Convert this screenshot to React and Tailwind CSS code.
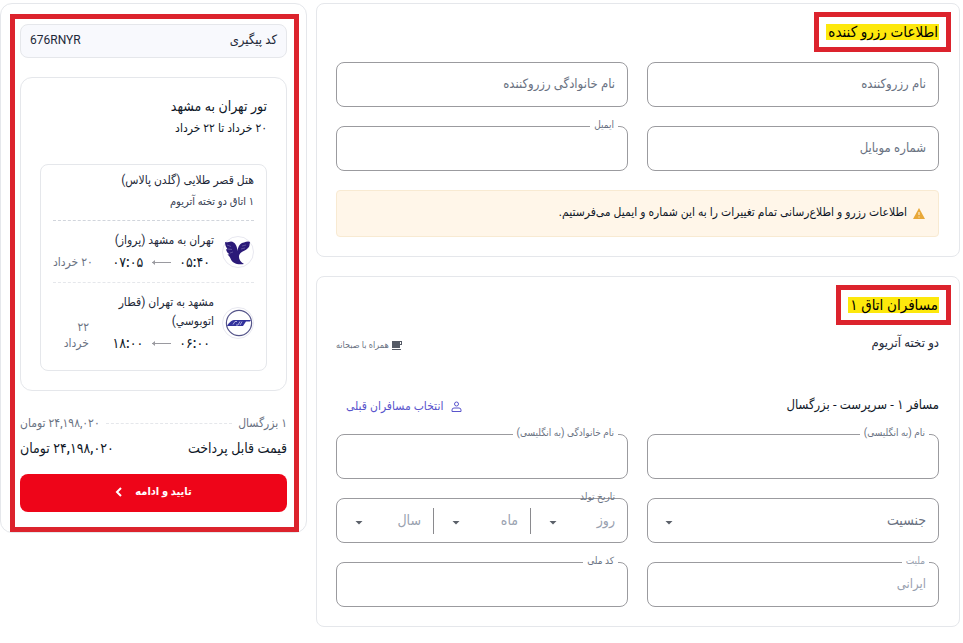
import { useId } from "react";

function Caret() {
  return (
    <svg className="pointer-events-none absolute top-1/2 left-[18px] h-1 w-2" viewBox="0 0 8 4" aria-hidden="true">
      <path d="M.5 0h7L4 3.500z" fill="#5b6069" />
    </svg>
  );
}

function Notch({ htmlFor, muted, children }) {
  return (
    <label
      htmlFor={htmlFor}
      className={`absolute -top-[7px] right-[10px] bg-white px-1 text-[10px] leading-3 ${muted ? "text-gray-400" : "text-gray-500"}`}
    >
      {children}
    </label>
  );
}

function Field({ label, placeholder, value, disabled }) {
  const id = useId();
  return (
    <div className="relative">
      <input
        id={id}
        type="text"
        aria-label={label ? undefined : placeholder}
        placeholder={placeholder}
        defaultValue={value}
        disabled={disabled}
        className="block h-[45px] w-full rounded-lg border border-[#9b9b9f] bg-white px-3 pb-0.5 text-[13px] text-gray-800 placeholder:text-gray-500 focus:outline-none focus:ring-2 focus:ring-blue-500 disabled:text-gray-400"
      />
      {label && <Notch htmlFor={id} muted={disabled}>{label}</Notch>}
    </div>
  );
}

function GenderSelect() {
  return (
    <div className="relative">
      <select
        aria-label="جنسیت"
        defaultValue=""
        className="block h-[45px] w-full appearance-none rounded-lg border border-[#9b9b9f] bg-white px-3 text-[14px] text-gray-500"
      >
        <option value="">جنسیت</option>
        <option>مرد</option>
        <option>زن</option>
      </select>
      <Caret />
    </div>
  );
}

function BirthDate() {
  const parts = ["روز", "ماه", "سال"];
  return (
    <div role="group" aria-label="تاریخ تولد" className="relative flex h-[45px] items-center rounded-lg border border-[#9b9b9f] bg-white">
      {parts.map((part, i) => (
        <div key={part} className={`relative flex-1 ${i > 0 ? "border-r border-[#8a8a8e]" : ""}`}>
          <select
            aria-label={part}
            defaultValue=""
            className="block h-[26px] w-full appearance-none bg-transparent px-3 text-[14px] text-gray-400"
          >
            <option value="">{part}</option>
          </select>
          <Caret />
        </div>
      ))}
      <span className="absolute -top-2 right-2 px-1 text-[10px] leading-3 text-gray-500">تاریخ تولد</span>
    </div>
  );
}

function MarkedHeading({ children }) {
  return (
    <h2 className="relative w-fit text-[15px] leading-4 text-black">
      <span className="block bg-[#fde80c] pr-px pl-0.5">{children}</span>
      <span className="pointer-events-none absolute -inset-x-3 -inset-y-3 border-[5px] border-[#dc232d]" />
    </h2>
  );
}

function AirlineLogo() {
  return (
    <svg className="h-8 w-8 shrink-0" viewBox="0 0 32 32" aria-hidden="true">
      <circle cx="16" cy="16" r="15.5" fill="#fff" stroke="#e8e8f0" />
      <path
        d="M3 6c2 1 4-.5 6-.5 4 .5 6 4 6.500 9.500.5-5 3-8 6.500-8.500 2-1 5-1.500 6-.5 0 1-.5 2-.5 3 0 1.500-1 2.500-2 3.500-1.500 2-5 2.500-7 4.500-3 3-1.500 8 3.500 11-7 1-12-1-13.500-5.500-.5-1.500-1.500-2.500-3-4l2-.3c-2-1-3-3-3.500-5l1.500.1C4 11 3 9 3 6z"
        fill="#2b1a78"
      />
      <path d="M5 9l4 1.500M6 13l4 .5M8 17l3-1M20 10l4-1M19 13l4-1" stroke="#8f86bd" strokeWidth=".5" />
    </svg>
  );
}

function TrainLogo() {
  return (
    <svg className="h-8 w-8 shrink-0" viewBox="0 0 32 32" aria-hidden="true">
      <circle cx="16" cy="16" r="15.5" fill="#fff" stroke="#e8e8f0" />
      <circle cx="17" cy="16" r="12.6" fill="#fff" stroke="#55558a" strokeWidth="1.2" />
      <path d="M12 13h17l-1 1.500h-4L21 19H5c1-2 4-5.500 7-6z" fill="#33339c" />
      <path d="M11 17.500l2-3h2M14 18h2l2-3.500M18 18l2-3.500" fill="none" stroke="#c9c9ee" strokeWidth=".8" />
    </svg>
  );
}

function Leg({ logo, title, from, to, date, wrapDate }) {
  return (
    <div className="flex items-center gap-2">
      {logo}
      <div className="flex flex-1 items-end justify-between">
        <div>
          <p className="max-w-[112px] text-[12px] leading-[19px] text-gray-800">{title}</p>
          <p className="flex items-center gap-2 pt-0.5 pr-1 text-[14px] leading-5 font-medium text-gray-900">
            <span>{from}</span>
            <svg className="h-2 w-5" viewBox="0 0 20 8" fill="none" stroke="#9a9aa0" aria-hidden="true">
              <path d="M1 4.500h19" />
              <path d="M4 2L1 4.500 4 7z" fill="#9a9aa0" stroke="none" />
            </svg>
            <span>{to}</span>
          </p>
        </div>
        <p className={`pb-0.5 text-[12px] leading-4 text-gray-500 ${wrapDate ? "w-9" : "whitespace-nowrap"}`}>{date}</p>
      </div>
    </div>
  );
}

function Summary() {
  return (
    <aside className="relative self-start rounded-xl border border-gray-200 bg-white px-[19px] py-5">
      <div className="flex h-[34px] items-center justify-between rounded-lg border border-gray-200 bg-[#f8f9fd] px-[9px] pb-0.5 text-gray-800">
        <span className="text-[13px]">کد پیگیری</span>
        <span className="text-[12px]">676RNYR</span>
      </div>

      <section className="mt-[19px] rounded-xl border border-gray-200 px-[19px] pt-[18px] pb-[19px]">
        <h3 className="text-[14px] leading-5 text-gray-900">تور تهران به مشهد</h3>
        <p className="pt-0.5 text-[12px] leading-5 text-gray-900">۲۰ خرداد تا ۲۲ خرداد</p>

        <div className="mt-[26px] rounded-lg border border-gray-200 px-3 pb-[17px]">
          <p className="pt-[5px] text-[12px] leading-5 text-gray-800">هتل قصر طلایی (گلدن پالاس)</p>
          <p className="pt-0.5 text-[11px] leading-5 text-gray-700">۱ اتاق دو تخته آتریوم</p>
          <hr className="mt-2 mb-[10px] border-dashed border-gray-300" />
          <Leg logo={<AirlineLogo />} title="تهران به مشهد (پرواز)" from="۰۵:۴۰" to="۰۷:۰۵" date="۲۰ خرداد" />
          <hr className="my-[10px] border-dashed border-gray-200" />
          <Leg logo={<TrainLogo />} title="مشهد به تهران (قطار اتوبوسي)" from="۰۶:۰۰" to="۱۸:۰۰" date="۲۲ خرداد" wrapDate />
        </div>
      </section>

      <div className="mt-[22px] flex items-center gap-1.5 text-[12px] leading-5 text-gray-500">
        <span>۱ بزرگسال</span>
        <span className="flex-1 border-t border-dashed border-gray-200" />
        <span>۲۴,۱۹۸,۰۲۰ تومان</span>
      </div>
      <div className="mt-[3px] flex items-center justify-between text-[14px] leading-6 font-medium text-gray-900">
        <span>قیمت قابل پرداخت</span>
        <span>۲۴,۱۹۸,۰۲۰ تومان</span>
      </div>
      <button type="button" className="mt-[14px] flex h-[38px] w-full items-center justify-center gap-3 rounded-lg bg-[#ee0519] pb-0.5 text-[11px] font-bold text-white">
        تایید و ادامه
        <svg className="h-2.5 w-2" viewBox="0 0 8 10" fill="none" stroke="currentColor" strokeWidth="2" aria-hidden="true">
          <path d="M6 1L2 5l4 4" />
        </svg>
      </button>
      <span className="pointer-events-none absolute top-2.5 right-[7px] bottom-0 left-[9px] border-[5px] border-[#dc232d]" />
    </aside>
  );
}

function BookerCard() {
  return (
    <section className="rounded-lg border border-gray-200 bg-white pt-5 pr-5 pb-[19px] pl-[19px]">
      <MarkedHeading>اطلاعات رزرو کننده</MarkedHeading>
      <div className="mt-[22px] grid grid-cols-2 gap-[19px]">
        <Field placeholder="نام رزروکننده" />
        <Field placeholder="نام خانوادگی رزروکننده" />
        <Field placeholder="شماره موبایل" />
        <Field label="ایمیل" />
      </div>
      <div className="mt-[19px] flex h-[47px] items-center gap-1.5 rounded border border-[#f8ead2] bg-[#fff6e9] px-[13px] text-[12px] text-gray-900">
        <svg className="h-[11px] w-3" viewBox="0 0 12 11" aria-hidden="true">
          <path d="M6 0l6 11H0z" fill="#e8a838" />
          <path d="M6 4v3M6 8.500v1" stroke="#fff6e9" />
        </svg>
        <p className="pb-1">اطلاعات رزرو و اطلاع‌رسانی تمام تغییرات را به این شماره و ایمیل می‌فرستیم.</p>
      </div>
    </section>
  );
}

function PassengerCard() {
  return (
    <section className="rounded-lg border border-gray-200 bg-white pt-5 pr-5 pb-[19px] pl-[19px]">
      <MarkedHeading>مسافران اتاق ۱</MarkedHeading>
      <div className="mt-[18px] flex items-center justify-between text-[13px] leading-5 text-gray-800">
        <p>دو تخته آتریوم</p>
        <p className="flex items-center gap-[3px] pt-1 text-[9px] text-gray-500">
          <svg className="h-[9px] w-[10px]" viewBox="0 0 10 9" aria-hidden="true">
            <path d="M0 0h10v4H8v3H0zM8 1v2h1V1zM0 8h9v1H0z" fill="#555b66" fillRule="evenodd" />
          </svg>
          همراه با صبحانه
        </p>
      </div>
      <div className="mt-[39px] flex items-center justify-between leading-5">
        <h3 className="text-[13px] text-gray-900">مسافر ۱ - سرپرست - بزرگسال</h3>
        <button type="button" className="flex items-center gap-2 px-[10px] pt-0.5 text-[12px] text-[#5a55cc]">
          <svg className="h-[11px] w-[11px]" viewBox="0 0 11 11" fill="none" stroke="currentColor" aria-hidden="true">
            <circle cx="5.500" cy="3" r="2" />
            <path d="M1 10.500V9q0-2 2-2h5q2 0 2 2v1.500z" />
          </svg>
          انتخاب مسافران قبلی
        </button>
      </div>
      <div className="mt-[18px] grid grid-cols-2 gap-[19px]">
        <Field label="نام (به انگلیسی)" />
        <Field label="نام خانوادگی (به انگلیسی)" />
        <GenderSelect />
        <BirthDate />
        <Field label="ملیت" value="ایرانی" disabled />
        <Field label="کد ملی" />
      </div>
    </section>
  );
}

export default function App() {
  return (
    <div dir="rtl" className="min-h-screen bg-white pt-[3px] pr-[3px] font-[Roboto,'DejaVu_Sans_Condensed','DejaVu_Sans',sans-serif]">
      <div className="grid grid-cols-[644fr_307fr] gap-[9px]">
        <main className="flex flex-col gap-[19px]">
          <BookerCard />
          <PassengerCard />
        </main>
        <Summary />
      </div>
    </div>
  );
}
